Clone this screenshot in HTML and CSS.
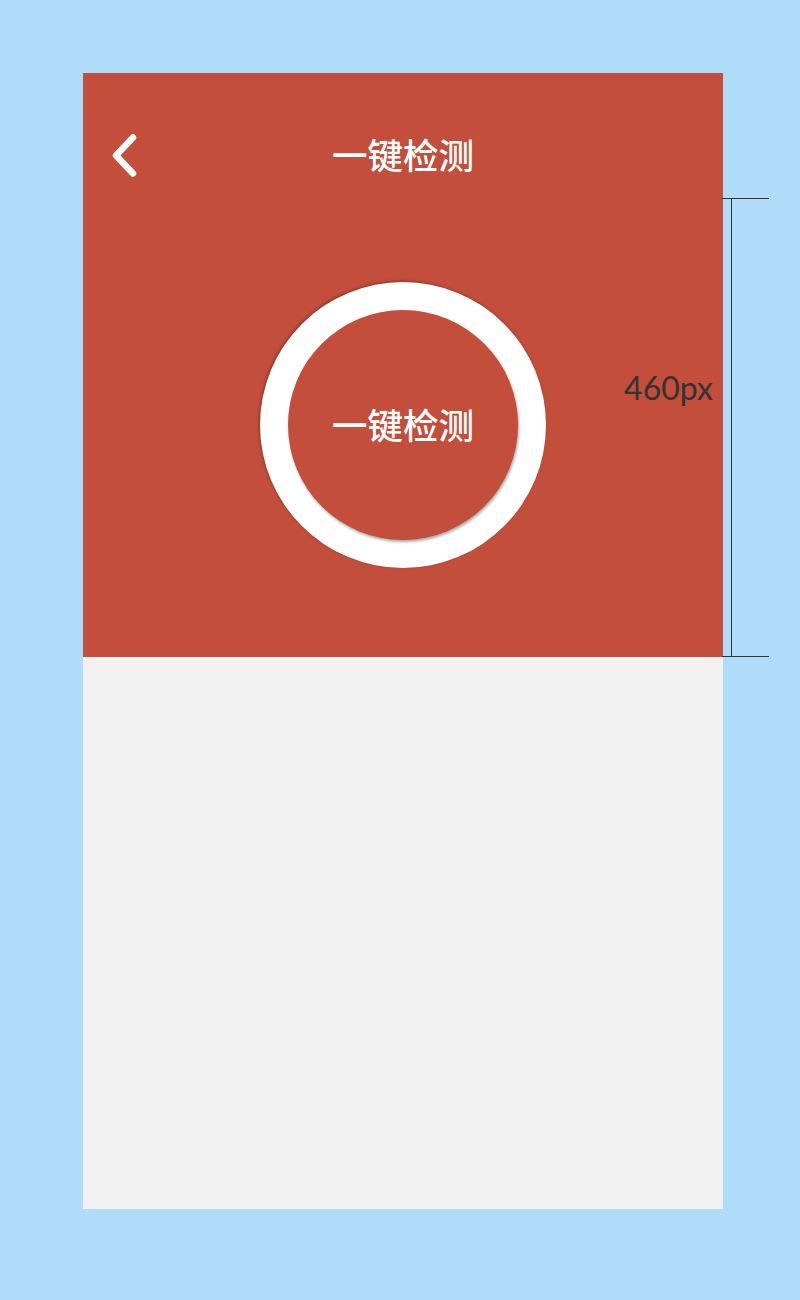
FILE: index.html
```html
<!DOCTYPE html>
<html lang="zh-CN">
<head>
<meta charset="utf-8">
<title>一键检测</title>
<link rel="stylesheet" href="styles.css">
</head>
<body>
<div class="canvas">
  <div class="phone">
    <section class="hero">
      <header class="topbar">
        <button class="back" aria-label="返回">
          <svg width="30" height="44" viewBox="0 0 30 44"><polyline points="22,3.5 5,21.5 22,39.5" fill="none" stroke="#fff" stroke-width="6.5" stroke-linecap="round" stroke-linejoin="round"/></svg>
        </button>
        <h1 class="title">一键检测</h1>
      </header>
      <div class="hero-body">
        <div class="ring">
          <div class="core">一键检测</div>
        </div>
      </div>
    </section>
    <section class="content"></section>
  </div>
  <div class="dim">
    <span class="dim-tick dim-top"></span>
    <span class="dim-line"></span>
    <span class="dim-tick dim-bottom"></span>
    <span class="dim-label">460px</span>
  </div>
</div>
</body>
</html>
```
FILE: styles.css
```css
html, body {
  margin: 0;
  padding: 0;
  background: #aedcf9;
}
body {
  font-family: "Noto Sans CJK SC", "Noto Sans", sans-serif;
}
.canvas {
  position: relative;
  width: 800px;
  height: 1300px;
  padding: 73px 0 0 83px;
  box-sizing: border-box;
}
.phone {
  width: 640px;
  display: flex;
  flex-direction: column;
}
.hero {
  height: 584px;
  background: #c24e3b;
  display: flex;
  flex-direction: column;
}
.topbar {
  position: relative;
  height: 166px;
  display: flex;
  align-items: center;
  justify-content: center;
}
.back {
  position: absolute;
  left: 28px;
  top: 61px;
  padding: 0;
  border: 0;
  background: none;
  width: 30px;
  height: 44px;
  display: flex;
}
.title {
  margin: 0 0 4px;
  color: #fff;
  font-size: 35.5px;
  font-weight: 500;
  line-height: 1;
  letter-spacing: 0;
}
.hero-body {
  padding-top: 43px;
  display: flex;
  justify-content: center;
}
.ring {
  width: 286px;
  height: 286px;
  border-radius: 50%;
  background: #fff;
  box-shadow: -1px -1px 3px rgba(0,0,0,0.3);
  display: flex;
  align-items: center;
  justify-content: center;
}
.core {
  width: 230px;
  height: 230px;
  border-radius: 50%;
  background: #c24e3b;
  box-shadow: 1px 2px 3px rgba(0,0,0,0.35);
  display: flex;
  align-items: center;
  justify-content: center;
  color: #fff;
  font-size: 35.5px;
  font-weight: 500;
  line-height: 1;
  padding-bottom: 2px;
  box-sizing: border-box;
}
.content {
  height: 552px;
  background: #f2f2f2;
}
.dim {
  position: absolute;
  left: 0;
  top: 0;
}
.dim-tick {
  position: absolute;
  left: 722px;
  width: 47px;
  height: 1px;
  background: #333;
}
.dim-top { top: 198px; }
.dim-bottom { top: 656px; }
.dim-line {
  position: absolute;
  left: 731px;
  top: 198px;
  width: 1px;
  height: 459px;
  background: #333;
}
.dim-label {
  position: absolute;
  left: 592px;
  top: 368px;
  width: 121px;
  text-align: right;
  font-family: Lato, "Noto Sans", sans-serif;
  font-size: 32px;
  line-height: 40px;
  color: #333;
}
```
